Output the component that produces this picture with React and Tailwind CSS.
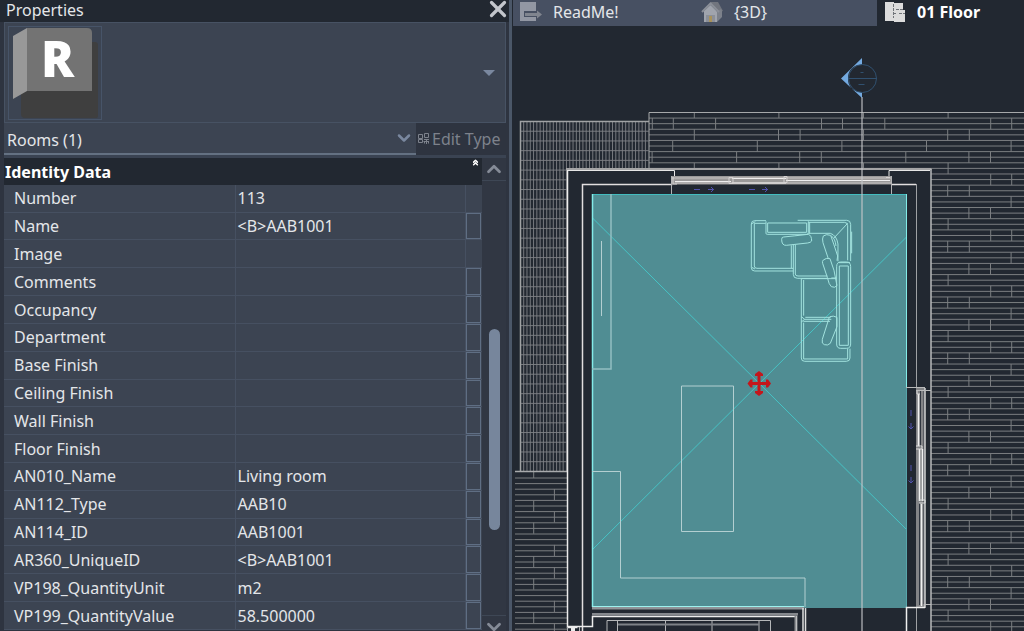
import React from 'react';
import { X, ChevronUp, ChevronDown, ChevronsUp } from 'lucide-react';

const properties = [
    { name: 'Number', value: '113', button: false },
    { name: 'Name', value: '<B>AAB1001', button: true },
    { name: 'Image', value: '', button: false },
    { name: 'Comments', value: '', button: true },
    { name: 'Occupancy', value: '', button: true },
    { name: 'Department', value: '', button: true },
    { name: 'Base Finish', value: '', button: true },
    { name: 'Ceiling Finish', value: '', button: true },
    { name: 'Wall Finish', value: '', button: true },
    { name: 'Floor Finish', value: '', button: true },
    { name: 'AN010_Name', value: 'Living room', button: true },
    { name: 'AN112_Type', value: 'AAB10', button: true },
    { name: 'AN114_ID', value: 'AAB1001', button: true },
    { name: 'AR360_UniqueID', value: '<B>AAB1001', button: true },
    { name: 'VP198_QuantityUnit', value: 'm2', button: true },
    { name: 'VP199_QuantityValue', value: '58.500000', button: true },
];

function TypePreview() {
    return (
        <svg viewBox="0 0 92 92" className="h-full w-full overflow-visible" aria-hidden="true">
            <path d="M12 15h74q3 0 3 3v71q0 2-2 2H16q-4 0-4-4z" fill="#3f3f3f" />
            <path d="M4 9 18 1v63L4 72z" fill="#989898" />
            <path d="M18 1h60q5 0 5 5v58H18z" fill="#737373" />
            <text x="32" y="50" fontSize="49" fontWeight="800" fill="#fff" fontFamily="Open Sans, sans-serif">R</text>
        </svg>
    );
}

function EditTypeIcon() {
    return (
        <svg viewBox="0 0 12 12" className="h-3 w-3" fill="none" stroke="#7d828c" aria-hidden="true">
            <path d="M.5 1.5h4v4h-4zM6.5.5h4v4h-4zM.5 6.5h4v3h-4zM6 6.5h5M8.5 7v4M5.5 8.5h5.5M6.5 10.5v-2M10.5 10.5v-2" />
        </svg>
    );
}

function ScheduleIcon() {
    return (
        <svg viewBox="0 0 24 22" className="h-[22px] w-6" aria-hidden="true">
            <path d="M1 1h16v9H5v6h12v4H1z" fill="#9297a3" />
            <path d="M6 12h12V9.5l5 4-5 4V15H6z" fill="#80858f" />
        </svg>
    );
}

function HouseIcon() {
    return (
        <svg viewBox="0 0 24 22" className="h-[22px] w-6" aria-hidden="true">
            <path d="M10 1h7l5 9-4 1-8-8z" fill="#71757e" />
            <path d="m15 11 5-3 1 2v6l-5 5h-2z" fill="#7c818b" />
            <path d="M3 10 9.5 4l6.5 6.5V21H3z" fill="#a0a4ad" />
            <path d="m1 11 8.5-8.5L18 11" fill="none" stroke="#8b8f98" strokeWidth="2" />
            <path d="M5 14h9v7H5z" fill="#8b8f98" />
            <path d="M8 15h3v6H8z" fill="#a8925c" />
        </svg>
    );
}

function PlanIcon() {
    return (
        <svg viewBox="0 0 24 22" className="h-[22px] w-6" aria-hidden="true">
            <path d="M1 1h9v1h9v7h2v12H10v-1H1z" fill="#dcdcdc" />
            <path d="M9.5 3v14M9 12.5h3M15 12.5h6M12 8.500h8" fill="none" stroke="#6f7378" strokeDasharray="3 1" />
        </svg>
    );
}

// brick courses: joints repeat every five courses
const COURSE = 11.18;
const BOND = 169.2;
const joints = [
    [694.3, 778.9],
    [652.3, 673.3, 715.6],
    [694.3, 778.5, 800.1],
    [672.7, 757.3],
    [652.1, 736.6, 799.7],
];

function deckPath() {
    let d = '';
    for (let row = 0; row < 48; row++) {
        const y = 106.9 + row * COURSE;
        d += `M640 ${y}H1030M640 ${y + COURSE / 2}H1030`;
        joints[row % 5].forEach((x) => {
            for (let k = 0; k < 3; k++) {
                d += `M${x + k * BOND} ${y}v${COURSE}`;
            }
        });
    }
    return d;
}

function sideDeckPath() {
    const marks = [554.4, 533.7, 554.4, 533.7, null];
    let d = 'M533.7 471v7';
    for (let k = 0; k < 28; k++) {
        d += `M515 ${478 + k * 5.6}h52`;
    }
    for (let k = 0; k < 13; k++) {
        const x = marks[k % 5];
        if (x) d += `M${x} ${489 + k * COURSE}v${COURSE}`;
    }
    return d;
}

function gratingPath() {
    let d = '';
    for (let k = 1; k < 36; k++) {
        d += `M520 ${121.5 + k * 9.72}H649`;
    }
    for (let k = 1; k < 39; k++) {
        d += `M${520.4 + k * 3.29} 121V471`;
    }
    return d;
}

function Sofa() {
    return (
        <g transform="translate(660 150) scale(0.3333)" fill="none" stroke="#a3e3df" strokeWidth="3" strokeLinejoin="round">
            <path d="M318 212H284q-10 0-10 10v131q0 10 10 10h116M283 220v128q0 7 8 7h109M283 220h34M274 222l12-7M275 352l10 5" />
            <path d="M318 214v36q0 3 4 3h118q5 0 5-5v-34M323 219v28h117v-28zM413 211h147q12 0 12 12v110M445 217h108q10 0 10 10v104M449 217v33" />
            <path d="M400 284v89q0 12 12 12h90M406 284v88q0 6 8 6h88M394 286v69M445 250h66q19 6 23 32v52M514 258q12 8 14 30M522 264l41-44" />
            <path d="M371 261q30-3 74-8 10 3 10 20-3 5-12 6l-64 7q-14 1-14-18 0-7 6-7z" />
            <path d="M490 258q9-7 22-2 8 22 21 62l-2 14M490 258q-4 8-1 20l16 48M490 330q8-7 20-4l12 35 9 46q-6 8-17 3-7-5-12-28l-14-42q-2-6 2-10z" />
            <path d="M530 350q0-14 12-14h18q12 0 12 14v232q0 13-12 13h-18q-12 0-12-13zM538 348h27v238h-27zM536 338h34M575 245v65" />
            <path d="M424 386v238q0 10 10 10h125q11 0 11-10v-28M431 390v107M431 518v109h132v-31M424 386h104M436 502h76M434 508h80M430 514h80M424 500l10 8-10 8M514 384h16" />
            <path d="M510 500q10-4 21 2v28l-20 50q-8 8-18 4-9-2-6-16l19-60q1-6 4-8z" />
        </g>
    );
}

function FloorPlan() {
    return (
        <svg
            viewBox="512 26 512 605"
            preserveAspectRatio="xMinYMin slice"
            className="absolute inset-0 h-full w-full"
            fill="none"
            role="img"
            aria-label="Floor plan"
        >
            <defs>
                <clipPath id="deck">
                    <path d="M649 112h400v560H931V169H649z" />
                </clipPath>
                <clipPath id="grating">
                    <path d="M520 121h129v48h-82v302h-47z" />
                </clipPath>
            </defs>

            {/* outside surfaces */}
            <path d={deckPath()} stroke="#7b7e81" clipPath="url(#deck)" />
            <path d="M649 169V112.500H1024" stroke="#a6a8aa" />
            <path d={gratingPath()} stroke="#7f8286" strokeOpacity="0.9" clipPath="url(#grating)" />
            <path d="M649 121.500H520.500V471" stroke="#a0a2a4" strokeWidth="1.500" />
            <path d={sideDeckPath()} stroke="#7b7e81" />
            <path d="M515 471.500h52" stroke="#a8aaac" strokeWidth="1.500" />

            {/* room */}
            <path d="M592 194h315v414H592z" fill="#508d93" />
            <path d="M592 217.500 906.500 529.500M592 550 906.500 237" stroke="#46c3c5" />
            <path d="M592 194.500h315" stroke="#43bcbf" />
            <path d="M592.500 194v413" stroke="#84ebe8" strokeWidth="1.500" />
            <path d="M906.500 194v193" stroke="#84ebe8" />
            <path d="M906.500 387v221" stroke="#58a5aa" />

            {/* furniture */}
            <path d="M611 194v175h-19" stroke="#92bfc2" strokeWidth="1.500" />
            <path d="M601.500 241v75M592 471.500h28.500V578H805v29M681.500 386h52v145.500h-52z" stroke="#b3cfd1" />
            <Sofa />

            {/* walls */}
            <path d="M566 169H931.500" stroke="#a5a5a6" strokeWidth="2" />
            <path d="M567.500 627.500V170.500h107V176M889 176v-5.500h41" stroke="#e6e6e6" />
            <path d="M567.500 170v457.500h10" stroke="#ececec" strokeWidth="1.500" />
            <path d="M582.500 631V184.500h90M891 184.500h25" stroke="#e2dedf" strokeWidth="1.500" />
            <path d="M931 169v462" stroke="#b9babb" strokeWidth="1.500" />
            <path d="M916.500 184v447" stroke="#9fa1a4" />

            {/* top window */}
            <path d="M672 176h219v8.500H672z" fill="#9b9999" />
            <path d="M672 178h219M675 183h216" stroke="#c5c2c2" />
            <path d="M675 181.500h56M732 178.500h54M732 183h54M786 180.500h104" stroke="#f0eeee" />
            <path d="M729 177.500h4v6h-4zM784 176.500h3v6h-3zM673 177v7h4M886 177.500h4" stroke="#d5d2d2" />
            <path d="M671.500 176v18M891.500 176v18" stroke="#b4b4b5" />

            {/* side window */}
            <path d="M916 388h9v219h-9z" fill="#838487" />
            <path d="M920.500 390v57M924 390v214M919.500 503v102" stroke="#303640" />
            <path d="M918.500 394v52M919.500 449v52M922.500 449v52M921.500 504v102" stroke="#f1f1f1" strokeWidth="1.500" />
            <path d="M925 388v220" stroke="#d2d2d2" strokeWidth="1.500" />
            <path d="M916 446h6v3h-6M919 500h6v3h-6M917 391v3h3" stroke="#dddddd" />
            <path d="M906 387.500h19M916 390.500h15M925 604.500h6" stroke="#b9babb" />
            <path d="M906.500 631V607.500H925" stroke="#f0f0f0" strokeWidth="1.500" />

            <path d="M694 189.500h6M749 189.500h6M708 189.500h6M762 189.500h6M711 187l2.500 2.500-2.500 2.500M765 187l2.500 2.500-2.500 2.500M911 410v6M911 465v6M911 423v6M911 477v6M908.500 426.500l2.500 2.500 2.500-2.500M908.500 480.500l2.500 2.500 2.500-2.500" stroke="#5153ae" />

            {/* bottom wall and terrace rail */}
            <path d="M592 606h212v3.500H592z" fill="#8f9398" />
            <path d="M592 606.500h212" stroke="#9df1ee" />
            <path d="M592 613h206v2.500H592z" fill="#85888d" />
            <path d="M567 626.500h25.500V616.500H796.500V631" stroke="#ececec" strokeWidth="1.500" />
            <path d="M795.500 616v15" stroke="#8e9194" strokeWidth="2" />
            <path d="M803 608v23M805.500 608v23" stroke="#dedede" strokeWidth="1.500" />
            <path d="M571 627h4v5h-4z" fill="#ececec" />
            <path d="M567.500 627v4M579.500 627v4" stroke="#b0b2b4" />
            <path d="M607 631V620.500H770.500V631M617.500 620v11M665.500 620v11M712 620v11M759 620v11" stroke="#b5b7b9" />
            <path d="M618 624.500h141" stroke="#7e8287" strokeWidth="2" />

            {/* section line with its head */}
            <path d="M862 97v534" stroke="#c4c7c9" strokeOpacity="0.75" strokeWidth="1.500" />
            <path d="M841 78.500 862 58v6.500C852 65 848 71 848 78.500S852 91.500 862 92.500V98z" fill="#74aae0" />
            <circle cx="862.500" cy="78.500" r="14" stroke="#30506f" />
            <path d="M848 78.500h29M860.500 72.500h3M858.500 84.500h6" stroke="#30506f" />

            {/* room reference handle */}
            <g fill="#c4161c">
                <path d="M757.500 373h3v21h-3z" />
                <path d="M749 382h21v3h-21z" />
                <path d="M759 371l4 3v2h-8v-2zM759 396l4-3v-2h-8v2zM747.500 383.500l3-4h2v8h-2zM771 383.500l-3-4h-2v8h2z" />
            </g>
        </svg>
    );
}

function PropertiesPanel() {
    return (
        <aside className="flex w-1/2 shrink-0 flex-col border-r-[3px] border-[#4b5768] bg-[#2e3440] pl-1 pr-[3px]">
            <header className="-ml-1 -mr-[3px] flex h-[22px] items-start justify-between bg-[#222831] pl-[6px] pr-px">
                <h1 className="text-base leading-5">Properties</h1>
                <button type="button" aria-label="Close" className="flex h-[18px] w-5 items-center justify-center text-[#c3c6cc]">
                    <X size={26} strokeWidth={3} className="shrink-0" />
                </button>
            </header>

            <div className="flex h-[101px] items-center justify-between border border-[#475263] bg-[#3c4452] pl-[3px] pr-[10px]">
                <div className="h-[94px] w-[94px] border border-[#475468]">
                    <TypePreview />
                </div>
                <button type="button" aria-label="Type selector" className="flex h-6 w-3 items-center justify-center">
                    <svg viewBox="0 0 12 6" className="h-[6px] w-3" aria-hidden="true">
                        <path d="M0 0h12L6 6z" fill="#7a889f" />
                    </svg>
                </button>
            </div>

            <div className="flex h-8">
                <div className="relative flex-1 border-b-2 border-[#647182] bg-[#3c4452]">
                    <select aria-label="Category" className="h-full w-full appearance-none bg-transparent pl-[3px] pt-1 text-base">
                        <option>Rooms (1)</option>
                    </select>
                    <ChevronDown size={20} strokeWidth={3} className="pointer-events-none absolute right-0.5 top-[5px] text-[#7a889f]" />
                </div>
                <button type="button" disabled className="flex w-[90px] items-center gap-[2px] whitespace-nowrap pl-[2px] text-base text-[#7d828c]">
                    <EditTypeIcon />
                    Edit Type
                </button>
            </div>

            <div className="h-[3px] bg-[#3a4352]" />

            <div className="flex flex-1">
                <table className="h-[472px] flex-1 table-fixed self-start border-collapse bg-[#3c4452] text-base leading-5">
                    <colgroup>
                        <col className="w-[231px]" />
                        <col />
                        <col className="w-[17px]" />
                    </colgroup>
                    <thead>
                        <tr className="h-[27px] bg-[#222831]">
                            <th colSpan={2} className="p-0 pl-px text-left font-bold text-white">Identity Data</th>
                            <th className="p-0 pl-[6px] align-top">
                                <button type="button" aria-label="Collapse group" className="block text-white">
                                    <ChevronsUp size={9} strokeWidth={4} />
                                </button>
                            </th>
                        </tr>
                    </thead>
                    <tbody>
                        {properties.map((item) => (
                            <tr key={item.name} className="border-b border-[#465061]">
                                <th scope="row" className="border-r border-[#465061] p-0 pl-[10px] text-left font-normal">{item.name}</th>
                                <td className="p-0 pl-[2px]">{item.value}</td>
                                <td className="h-px border-l border-[#465061] p-0 pr-px">
                                    {item.button && (
                                        <button type="button" aria-label={`Associate ${item.name}`} className="block h-full w-full border border-[#5f6e83]" />
                                    )}
                                </td>
                            </tr>
                        ))}
                    </tbody>
                </table>
                <div className="flex w-6 flex-col items-center bg-[#313743]">
                    <button type="button" aria-label="Scroll up" className="flex h-[23px] w-full items-center justify-center border-b border-[#3e4755] text-[#858b97]">
                        <ChevronUp size={22} strokeWidth={3} />
                    </button>
                    <div className="flex-1 pt-[148px]">
                        <div className="h-[201px] w-[11px] rounded-full bg-[#77869c]" />
                    </div>
                    <button type="button" aria-label="Scroll down" className="flex h-4 w-full items-start justify-center overflow-hidden border-t border-[#3e4755] text-[#858b97]">
                        <ChevronDown size={22} strokeWidth={3} className="shrink-0" />
                    </button>
                </div>
            </div>
        </aside>
    );
}

function ViewTabs() {
    return (
        <nav className="flex h-[26px] pl-px text-base leading-5" role="tablist">
            <button type="button" role="tab" aria-selected="false" className="flex w-[182px] items-center gap-[10px] bg-[#475062] pb-[2px] pl-[6px]">
                <ScheduleIcon />
                ReadMe!
            </button>
            <button type="button" role="tab" aria-selected="false" className="flex w-[182px] items-center gap-[9px] bg-[#475062] pb-[2px] pl-[6px]">
                <HouseIcon />
                {'{3D}'}
            </button>
            <button type="button" role="tab" aria-selected="true" className="flex flex-1 items-center gap-[9px] whitespace-nowrap pb-[2px] pl-[7px] font-bold text-white">
                <PlanIcon />
                01 Floor
            </button>
        </nav>
    );
}

function App() {
    return (
        <div className="flex min-h-screen bg-[#222831] font-['Noto_Sans',sans-serif] text-[#e4e6e9]">
            <PropertiesPanel />
            <main className="flex min-w-0 flex-1 flex-col">
                <ViewTabs />
                <div className="relative flex-1 overflow-hidden">
                    <FloorPlan />
                </div>
            </main>
        </div>
    );
}

export default App;
